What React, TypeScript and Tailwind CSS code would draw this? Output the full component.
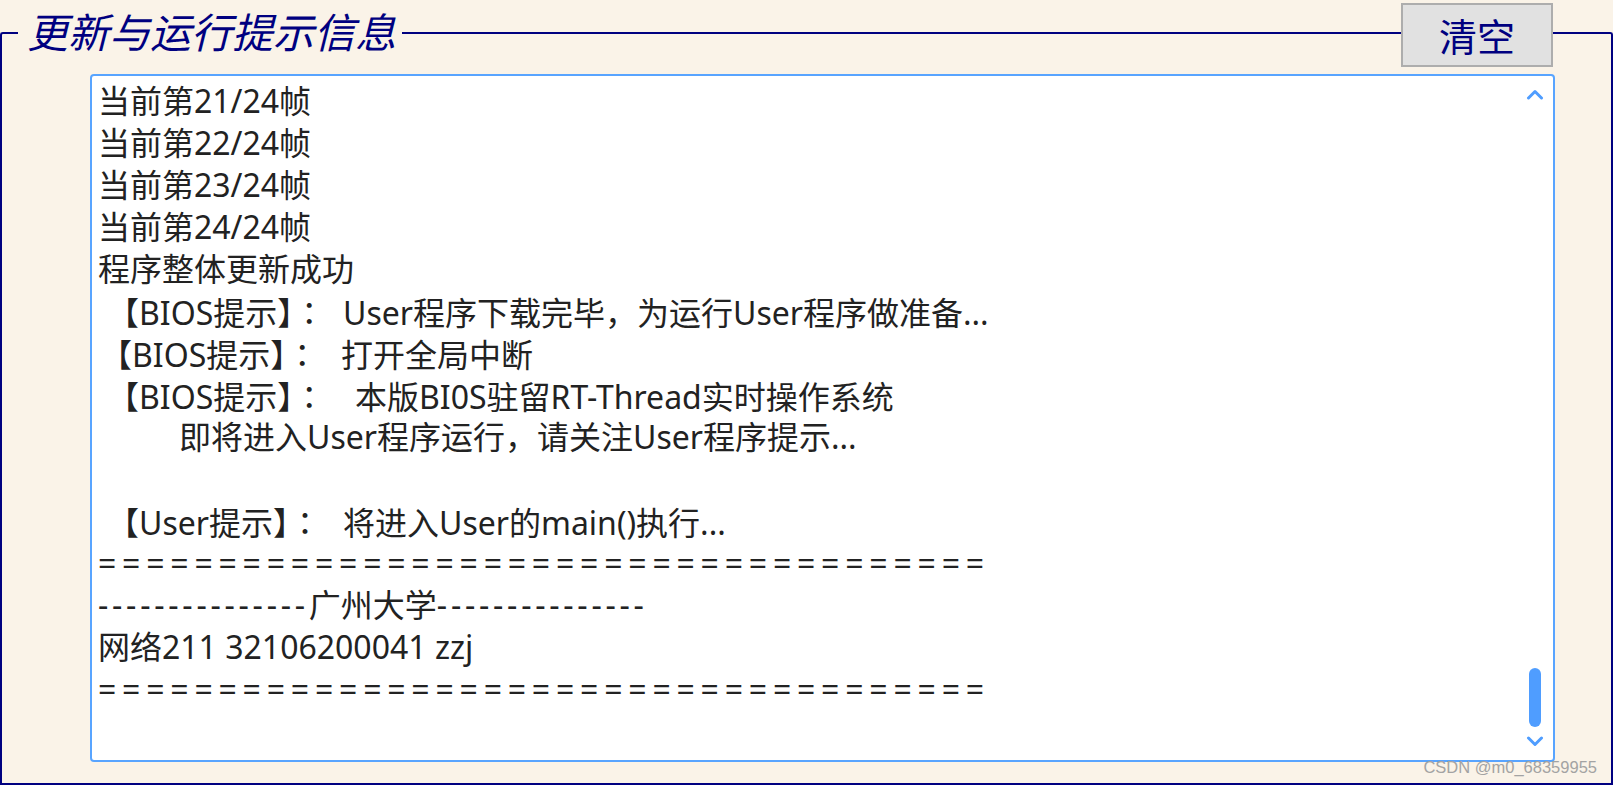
import React from "react";

function Dashes({ n }: { n: number }) {
  return <span className="tracking-[3.75px]">{"-".repeat(n)}</span>;
}

function Eq() {
  return <span className="tracking-[5.8px]">{"=".repeat(37)}</span>;
}

function Colon() {
  return <span style={{ fontFamily: '"Noto Sans CJK TC", sans-serif' }}>：</span>;
}

function Prefix({ w, pad, label }: { w: string; pad: string; label: string }) {
  return (
    <span className={`inline-block ${w} ${pad}`}>
      【{label}提示】
      <Colon />
    </span>
  );
}

const lines: React.ReactNode[] = [
  "当前第21/24帧",
  "当前第22/24帧",
  "当前第23/24帧",
  "当前第24/24帧",
  "程序整体更新成功",
  <>
    <Prefix w="w-[245px]" pad="pl-[9px]" label="BIOS" />
    User程序下载完毕，为运行User程序做准备...
  </>,
  <>
    <Prefix w="w-[243px]" pad="pl-[2px]" label="BIOS" />
    打开全局中断
  </>,
  <>
    <Prefix w="w-[257px]" pad="pl-[9px]" label="BIOS" />
    本版BI0S驻留RT-Thread实时操作系统
  </>,
  <>
    <span className="inline-block w-[81px]" />
    即将进入User程序运行，请关注User程序提示...
  </>,
  "",
  <>
    <Prefix w="w-[245px]" pad="pl-[9px]" label="User" />
    将进入User的main()执行...
  </>,
  <Eq key="e1" />,
  <>
    <Dashes n={15} />
    广州大学
    <Dashes n={15} />
  </>,
  "网络211 32106200041 zzj",
  <Eq key="e2" />,
];

function Chevron({ up }: { up?: boolean }) {
  return (
    <svg width="18" height="11" viewBox="0 0 18 11" className="block">
      <path
        d={up ? "M2.5 9 L9 2.5 L15.5 9" : "M2.5 2 L9 8.5 L15.5 2"}
        fill="none"
        stroke="#4f9dff"
        strokeWidth="3"
        strokeLinecap="round"
        strokeLinejoin="round"
      />
    </svg>
  );
}

export default function App() {
  return (
    <div
      className="relative w-[1613px] h-[785px] bg-[#faf3e8] overflow-hidden flex flex-col"
      style={{ fontFamily: '"Noto Sans", "Noto Sans CJK SC", sans-serif' }}
    >
      {/* header: top edge of the group box with legend and button */}
      <div className="h-[66px] flex shrink-0">
        <div className="w-[18px] h-[34px] self-end border-l-2 border-t-2 border-[#000080] rounded-tl-[3px] shrink-0" />
        <div
          className="shrink-0 self-start mt-[4px] ml-[9px] pr-[6px] text-[41px] leading-[52px] italic text-[#000080] whitespace-nowrap"
          style={{ fontFamily: '"Noto Sans CJK SC", sans-serif' }}
        >
          更新与运行提示信息
        </div>
        <div className="flex-1 h-[34px] self-end border-t-2 border-[#000080]" />
        <button
          className="shrink-0 self-start mt-[3px] w-[152px] h-[64px] border-2 border-[#adadad] bg-[#e1e1e1] text-[38px] leading-none text-[#000080] flex items-center justify-center"
          style={{ fontFamily: '"Noto Sans CJK SC", sans-serif' }}
        >
          清空
        </button>
        <div className="w-[60px] h-[34px] self-end border-t-2 border-r-2 border-[#000080] rounded-tr-[3px] shrink-0" />
      </div>

      {/* group box body */}
      <div className="flex-1 border-x-2 border-b-2 border-[#000080] flex flex-col">
        <div className="mt-[8px] ml-[88px] w-[1465px] h-[688px] border-2 border-[#58a4ff] rounded-[4px] bg-white flex">
          <div className="flex-1 pl-[6px] pt-[4px] text-[32px] text-[#222222] whitespace-pre">
            {lines.map((l, i) => (
              <div key={i} className="h-[42px] leading-[42px]">
                {l}
              </div>
            ))}
          </div>
          <div className="w-[24px] mr-[6px] flex flex-col items-center pt-[13px] pb-[13px]">
            <Chevron up />
            <div className="flex-1" />
            <div className="w-[12px] h-[59px] rounded-full bg-[#4f9dff]" />
            <div className="h-[9px]" />
            <Chevron />
          </div>
        </div>
      </div>

      <div
        className="absolute right-[16px] bottom-[10px] text-[16.5px] leading-none text-[#a3a3a3]"
        style={{ fontFamily: '"Liberation Sans", Arial, sans-serif' }}
      >
        CSDN @m0_68359955
      </div>
    </div>
  );
}
